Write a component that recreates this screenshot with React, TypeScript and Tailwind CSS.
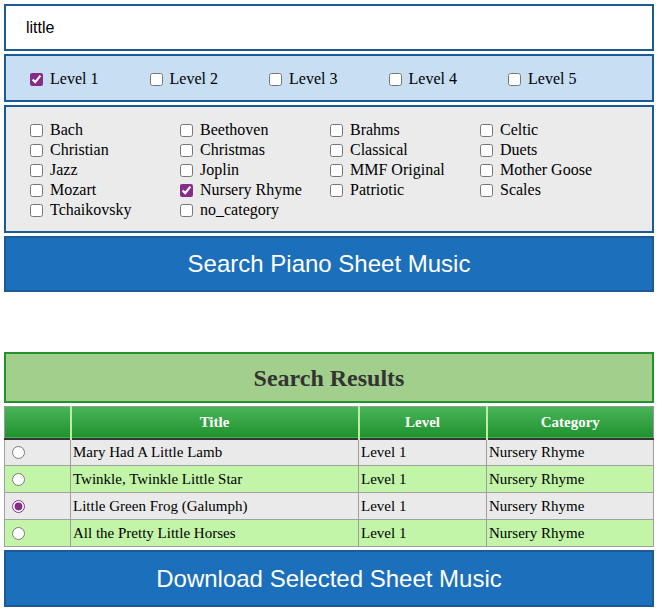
import { useState } from 'react'

const levels = ['Level 1', 'Level 2', 'Level 3', 'Level 4', 'Level 5']

const categories = [
  'Bach', 'Beethoven', 'Brahms', 'Celtic',
  'Christian', 'Christmas', 'Classical', 'Duets',
  'Jazz', 'Joplin', 'MMF Original', 'Mother Goose',
  'Mozart', 'Nursery Rhyme', 'Patriotic', 'Scales',
  'Tchaikovsky', 'no_category',
]

const results = [
  { title: 'Mary Had A Little Lamb', level: 'Level 1', category: 'Nursery Rhyme' },
  { title: 'Twinkle, Twinkle Little Star', level: 'Level 1', category: 'Nursery Rhyme' },
  { title: 'Little Green Frog (Galumph)', level: 'Level 1', category: 'Nursery Rhyme' },
  { title: 'All the Pretty Little Horses', level: 'Level 1', category: 'Nursery Rhyme' },
]

export default function App() {
  const [query, setQuery] = useState('little')
  const [checkedLevels, setCheckedLevels] = useState<string[]>(['Level 1'])
  const [checkedCats, setCheckedCats] = useState<string[]>(['Nursery Rhyme'])
  const [selected, setSelected] = useState(2)

  const toggle = (list: string[], set: (v: string[]) => void, v: string) =>
    set(list.includes(v) ? list.filter(x => x !== v) : [...list, v])

  return (
    <div className="flex w-[658px] flex-col p-[4px] font-['Liberation_Serif',serif] text-black">
      {/* Search text */}
      <input
        type="text"
        value={query}
        onChange={(e) => setQuery(e.target.value)}
        className="h-[47px] w-full border-2 border-[#1b5a94] bg-white px-[20px] font-['Liberation_Sans',sans-serif] text-[16px] outline-none"
      />

      {/* Levels */}
      <div className="mt-[3px] flex h-[48px] items-center border-2 border-[#1b5a94] bg-[#c7def3] pt-[2px] pl-[20px] font-['Liberation_Serif',serif] text-[16px]">
        {levels.map((l) => (
          <label key={l} className="flex w-[119.5px] items-center">
            <input
              type="checkbox"
              checked={checkedLevels.includes(l)}
              onChange={() => toggle(checkedLevels, setCheckedLevels, l)}
              className="mr-[7px] ml-[4px] h-[13px] w-[13px] accent-[#862d8a]"
            />
            {l}
          </label>
        ))}
      </div>

      {/* Categories */}
      <div className="mt-[3px] grid h-[128px] grid-cols-[150px_150px_150px_150px] content-start border-2 border-[#1b5a94] bg-[#ebebeb] pt-[13px] pb-[11px] pl-[20px] font-['Liberation_Serif',serif] text-[16px]">
        {categories.map((c) => (
          <label key={c} className="flex h-[20px] items-center">
            <input
              type="checkbox"
              checked={checkedCats.includes(c)}
              onChange={() => toggle(checkedCats, setCheckedCats, c)}
              className="mr-[7px] ml-[4px] h-[13px] w-[13px] accent-[#862d8a]"
            />
            {c}
          </label>
        ))}
      </div>

      <button className="mt-[3px] h-[56px] w-full border-2 border-[#1b5a94] bg-[#1c6fba] font-['Liberation_Sans',sans-serif] text-[24px] text-white">
        Search Piano Sheet Music
      </button>

      {/* Results */}
      <div className="mt-[60px] flex h-[51px] items-center justify-center border-2 border-[#22922c] bg-[#a2cf8c] text-[24px] font-bold text-[#333]">
        Search Results
      </div>

      <table className="mt-[3px] w-full border-collapse border border-[#999] text-[15px]">
        <thead>
          <tr className="h-[32px] border-b-2 border-b-[#333] bg-gradient-to-b from-[#48b556] to-[#1f922f] text-white">
            <th className="w-[66px] border-r-2 border-r-[#b8f09e]"></th>
            <th className="w-[288px] border-r-2 border-r-[#b8f09e] font-bold">Title</th>
            <th className="w-[128px] border-r-2 border-r-[#b8f09e] font-bold">Level</th>
            <th className="font-bold">Category</th>
          </tr>
        </thead>
        <tbody>
          {results.map((r, i) => (
            <tr key={r.title} className={`h-[27px] ${i % 2 === 0 ? 'bg-[#eaeaea]' : 'bg-[#c2f5a8]'}`}>
              <td className="border border-[#a0a0a0] pl-[7px]">
                <input
                  type="radio"
                  name="song"
                  checked={selected === i}
                  onChange={() => setSelected(i)}
                  className="block h-[13px] w-[13px] accent-[#862d8a]"
                />
              </td>
              <td className="border border-[#a0a0a0] px-[2px]">{r.title}</td>
              <td className="border border-[#a0a0a0] px-[2px]">{r.level}</td>
              <td className="border border-[#a0a0a0] px-[2px]">{r.category}</td>
            </tr>
          ))}
        </tbody>
      </table>

      <button className="mt-[3px] h-[57px] w-full border-2 border-[#1b5a94] bg-[#1c6fba] font-['Liberation_Sans',sans-serif] text-[24px] text-white">
        Download Selected Sheet Music
      </button>
    </div>
  )
}
